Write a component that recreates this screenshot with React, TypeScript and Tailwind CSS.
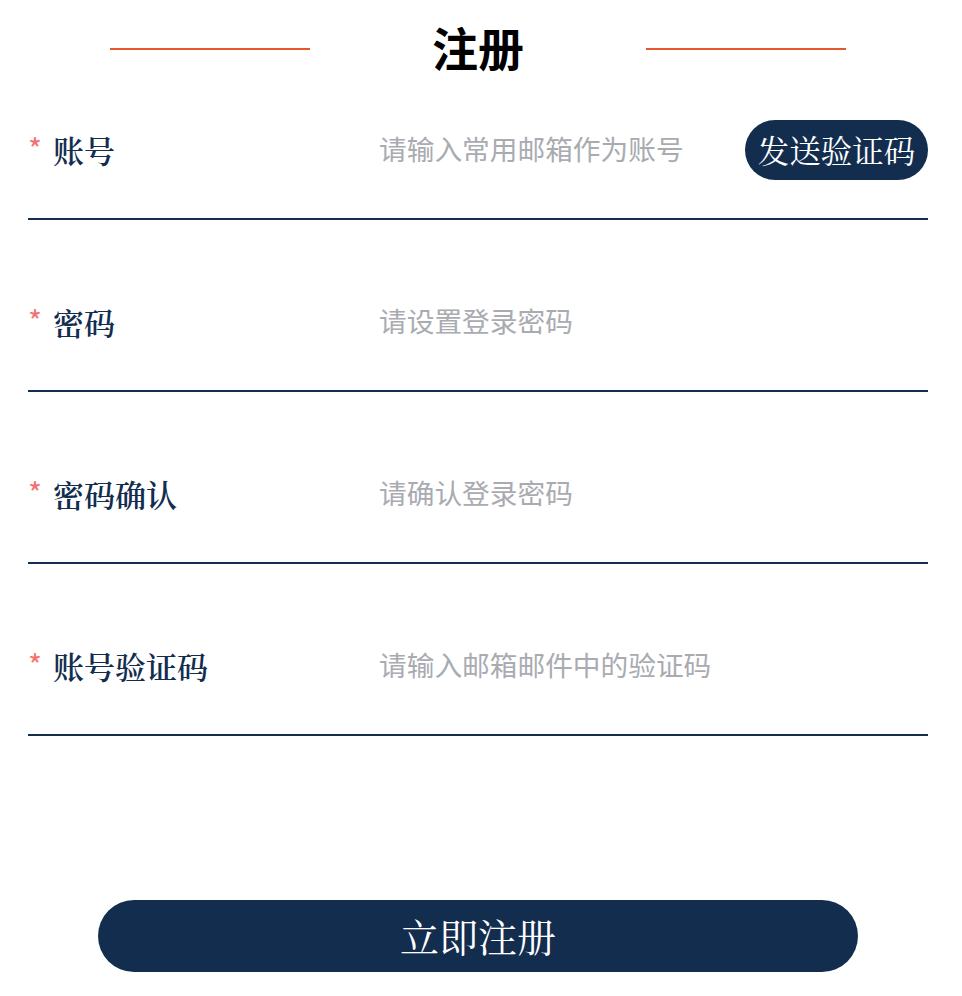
import React from "react";

const serif = '"Noto Serif CJK SC", "Liberation Serif", "Noto Sans CJK SC", serif';
const sans = '"Noto Sans CJK SC", "Noto Sans", sans-serif';

type Row = { label: string; placeholder: string; button?: boolean };

const rows: Row[] = [
  { label: "账号", placeholder: "请输入常用邮箱作为账号", button: true },
  { label: "密码", placeholder: "请设置登录密码" },
  { label: "密码确认", placeholder: "请确认登录密码" },
  { label: "账号验证码", placeholder: "请输入邮箱邮件中的验证码" },
];

export default function App() {
  return (
    <div className="w-[962px] min-h-[996px] bg-white pl-[28px] pr-[34px]" style={{ fontFamily: sans }}>
      <div className="h-[84px] pt-[8px] flex items-center justify-center">
        <div className="w-[200px] h-[2px] bg-[#e8552f] mt-[6px]" />
        <div className="w-[336px] flex justify-center">
          <span className="text-[46px] leading-none font-bold text-black" style={{ fontFamily: sans }}>
            注册
          </span>
        </div>
        <div className="w-[200px] h-[2px] bg-[#e8552f] mt-[6px]" />
      </div>
      <div className="flex flex-col gap-[36px]">
        {rows.map((r) => (
          <div key={r.label} className="h-[136px] flex items-center border-b-2 border-[#132d4f]">
            <div className="w-[352px] flex items-center -mt-[4px]">
              <span className="text-[#f47272] text-[30px] leading-none w-[25px] -mt-[2px]" style={{ fontFamily: sans }}>
                *
              </span>
              <span className="text-[31px] leading-none font-semibold text-[#132d4f]" style={{ fontFamily: serif }}>
                {r.label}
              </span>
            </div>
            <div className="flex-1 text-[27.7px] leading-none text-[#a9abb1] -mt-[4px] -ml-[1px]">{r.placeholder}</div>
            {r.button && (
              <button
                className="h-[60px] w-[183px] rounded-full bg-[#132d4f] text-white text-[31.5px] leading-none -mt-[2px]"
                style={{ fontFamily: serif }}
              >
                发送验证码
              </button>
            )}
          </div>
        ))}
      </div>
      <div className="mt-[164px] flex justify-center">
        <button
          className="w-[760px] h-[72px] rounded-full bg-[#132d4f] text-white text-[39px] leading-none"
          style={{ fontFamily: serif }}
        >
          <span className="relative -top-[1px]">立即注册</span>
        </button>
      </div>
    </div>
  );
}
